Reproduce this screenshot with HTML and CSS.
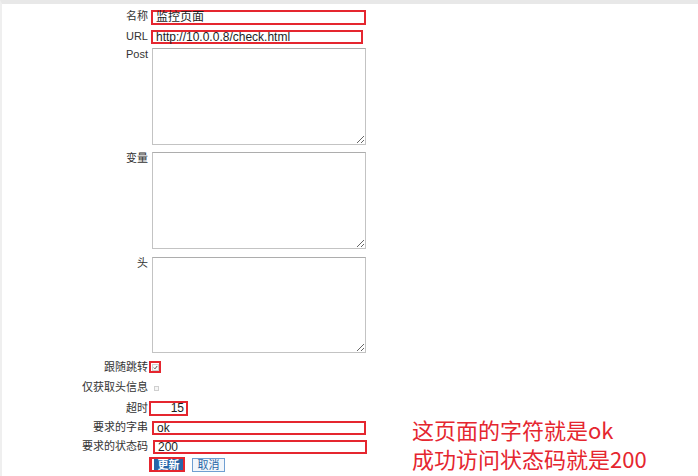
FILE: index.html
```html
<!DOCTYPE html>
<html lang="zh-CN">
<head>
  <meta charset="UTF-8">
  <title>Web 场景步骤</title>
  <link rel="stylesheet" href="styles.css">
</head>
<body>
  <div id="page">
    <form id="step-form">
      <div class="row">
        <label class="lbl">名称</label>
        <div class="mark mark-name"><span class="val">监控页面</span></div>
      </div>
      <div class="row">
        <label class="lbl">URL</label>
        <div class="mark mark-url"><span class="val">http://10.0.0.8/check.html</span></div>
      </div>
      <div class="row row-post">
        <label class="lbl">Post</label>
        <textarea class="area"></textarea>
      </div>
      <div class="row row-vars">
        <label class="lbl">变量</label>
        <textarea class="area"></textarea>
      </div>
      <div class="row row-head">
        <label class="lbl">头</label>
        <textarea class="area area-short"></textarea>
      </div>
      <div class="row row-follow">
        <label class="lbl">跟随跳转</label>
        <div class="mark mark-check">
          <span class="check checked">
            <svg width="5" height="5" viewBox="0 0 5 5"><path d="M0.8 2.6 L2 3.8 L4.2 1" fill="none" stroke="#444" stroke-width="0.9"/></svg>
          </span>
        </div>
      </div>
      <div class="row row-headonly">
        <label class="lbl">仅获取头信息</label>
        <span class="check plain"></span>
      </div>
      <div class="row row-timeout">
        <label class="lbl">超时</label>
        <div class="mark mark-timeout"><span class="val">15</span></div>
      </div>
      <div class="row row-string">
        <label class="lbl">要求的字串</label>
        <div class="mark mark-string"><span class="val">ok</span></div>
      </div>
      <div class="row">
        <label class="lbl">要求的状态码</label>
        <div class="mark mark-status"><span class="val">200</span></div>
      </div>
      <div class="row row-buttons">
        <span class="lbl"></span>
        <div class="mark mark-btn"><button type="button" class="btn btn-main">更新</button></div>
        <button type="button" class="btn btn-cancel">取消</button>
      </div>
    </form>

    <div id="note">
      <p>这页面的字符就是ok</p>
      <p>成功访问状态码就是200</p>
    </div>
  </div>
</body>
</html>
```

FILE: styles.css
```css
* {
  box-sizing: border-box;
}

:root {
  --frame: #e8e8e8;
  --label: #333333;
  --text: #1e1e1e;
  --mark: #e5262f;
  --field-border: #c3c3c3;
  --blue: #2766a8;
}

html, body {
  margin: 0;
  height: 100%;
  background: #ffffff;
  font-family: "Liberation Sans", "Noto Sans CJK SC", sans-serif;
}

#page {
  display: flex;
  height: 100%;
  border-top: 4px solid var(--frame);
  border-left: 2px solid #efefef;
}

#step-form {
  display: flex;
  flex-direction: column;
  gap: 5px;
  padding-top: 6px;
  width: 372px;
}

.row {
  display: flex;
  align-items: flex-start;
}

.lbl {
  width: 147px;
  flex: none;
  text-align: right;
  font-size: 11px;
  line-height: 13px;
  color: var(--label);
  padding-right: 1px;
}

.mark {
  border: 2px solid var(--mark);
  background: #fff;
  display: flex;
  align-items: center;
  font-size: 12px;
  line-height: 11px;
  color: var(--text);
}

.val {
  padding-left: 3px;
  white-space: nowrap;
}

.mark-name {
  margin-left: 2px;
  width: 215px;
  height: 15px;
}

.mark-url {
  margin-left: 2px;
  width: 212px;
  height: 14px;
}

.row-post {
  margin-top: -1px;
}

.row-vars {
  margin-top: 2px;
}

.row-head {
  margin-top: 3px;
}

.area {
  margin: 0 0 0 3px;
  width: 214px;
  height: 97px;
  border: 1px solid var(--field-border);
  border-top-color: #adadad;
  padding: 2px;
  font: inherit;
}

.area-short {
  height: 96px;
}

.row-follow {
  margin-top: 3px;
}

.mark-check {
  width: 12px;
  height: 12px;
  justify-content: center;
}

.check {
  display: inline-flex;
  align-items: center;
  justify-content: center;
  width: 6px;
  height: 6px;
  border: 1px solid #c4c4c4;
  background: #f6f6f6;
}

.check.checked {
  width: 7px;
  height: 7px;
  border-color: #d0d0d0;
  background: #fafafa;
}

.row-headonly {
  margin-top: 2px;
  align-items: center;
}

.check.plain {
  margin-left: 5px;
  margin-top: 2px;
  width: 5px;
  height: 5px;
  border-color: #cfcfcf;
}

.row-timeout {
  margin-top: 2px;
}

.row-timeout .lbl {
  padding-top: 1px;
}

.mark-timeout {
  width: 39px;
  height: 15px;
  justify-content: flex-end;
  padding-right: 2px;
}

.mark-string {
  margin-left: 3px;
  width: 214px;
  height: 14px;
}

.mark-status {
  margin-left: 4px;
  width: 214px;
  height: 14px;
}

.row-buttons {
  margin-top: -2px;
  align-items: center;
}

.mark-btn {
  width: 36px;
  height: 15px;
  padding: 0;
  background: var(--blue);
  border-left-width: 3px;
}

.btn {
  font-family: "Noto Sans CJK SC", sans-serif;
  font-size: 11px;
  line-height: 11px;
  padding: 0;
  margin: 0;
  border-radius: 0;
}

.btn-main {
  width: 100%;
  height: 100%;
  border: 0;
  border-left: 2px solid #ffffff;
  background: var(--blue);
  color: #fff;
  font-weight: bold;
}

.btn-cancel {
  margin-left: 7px;
  width: 33px;
  height: 14px;
  border: 1px solid #6f9fd2;
  background: #f2f6fb;
  color: var(--blue);
}

#note {
  align-self: flex-end;
  margin-left: 38px;
  color: var(--mark);
  font-family: "Noto Sans CJK SC", sans-serif;
  font-size: 22px;
  line-height: 29px;
  padding-bottom: 3px;
}

#note p {
  margin: 0;
}
```
